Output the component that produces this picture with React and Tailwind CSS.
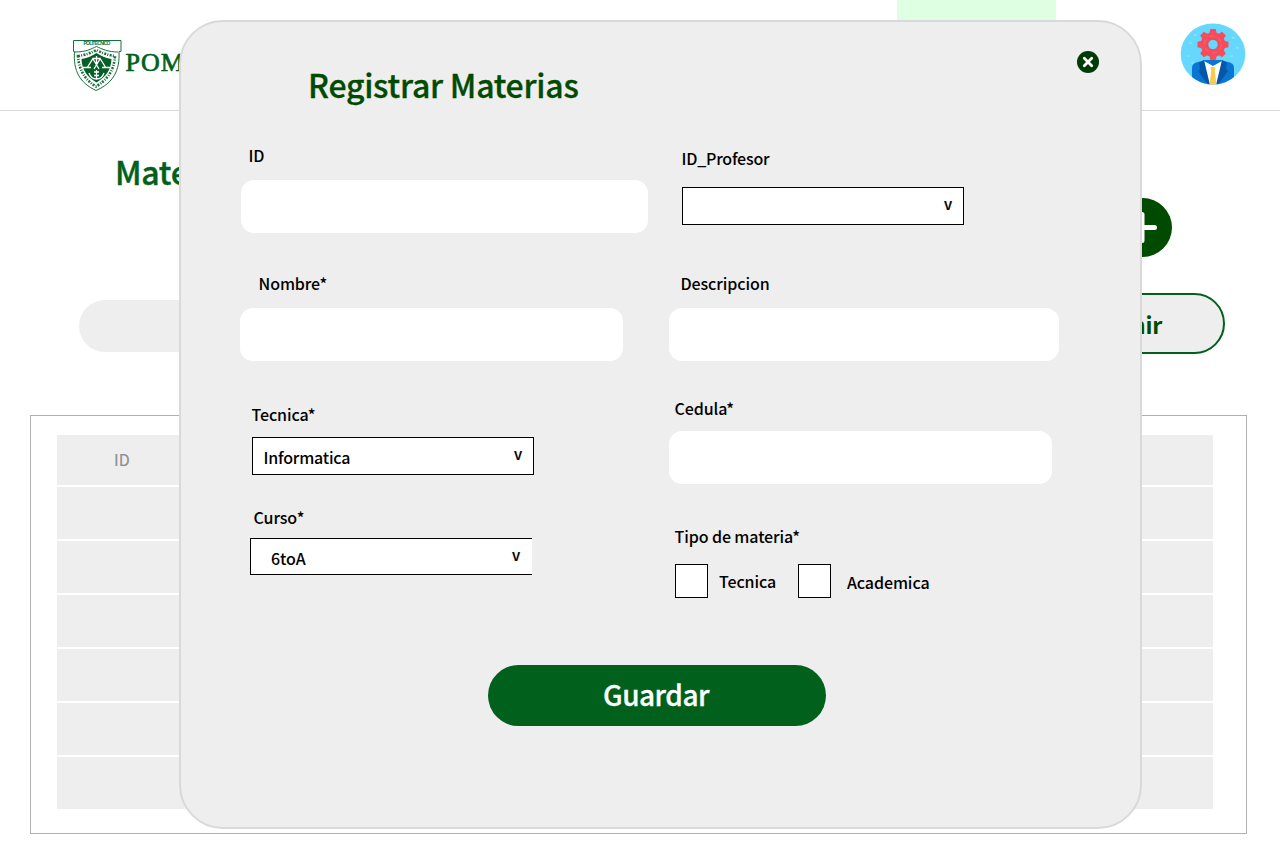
import React from "react";

function Label({ children, className = "" }) {
  return (
    <label className={`block h-6 whitespace-nowrap text-[16px] leading-6 font-medium tracking-[-0.1px] text-black ${className}`}>
      {children}
    </label>
  );
}

function Field({ className = "" }) {
  return <div className={`h-[53px] shrink-0 rounded-[13px] bg-white ${className}`} />;
}

function Select({ children, className = "", textClass = "" }) {
  return (
    <div className={`flex w-[282px] shrink-0 items-start justify-between border border-black bg-white text-[16px] leading-6 font-medium tracking-[-0.1px] text-black ${className}`}>
      <span className={textClass}>{children}</span>
      <span className="mr-[11px] mt-[4px] text-[15px] [-webkit-text-stroke:0.2px_black]">v</span>
    </div>
  );
}

function Shield() {
  return (
    <svg width="50" height="53" viewBox="0 0 50 53" fill="none">
      <path d="M1.5 1.5H49V12.5H47C48 32 41 44 24 51.5C8 44 1 32 2.5 12.5H1.5Z" fill="#fff" stroke="#17703a" strokeWidth="1" />
      <path d="M3 13C14 13 19 10 24.5 7.5C30 10 36 13 46 13" stroke="#17703a" strokeWidth="1" />
      <text x="25" y="6.3" textAnchor="middle" fontSize="5" fontWeight="700" textLength="27" fill="#17703a" fontFamily="Liberation Sans">POLITÉCNICO</text>
      <path d="M6 17Q15 16 24.5 11Q34 16 43 17C42 32 35 41 24 47.5C13 41 7 31 6 17Z" stroke="#17703a" strokeWidth="2.6" strokeDasharray="2 1.2 1 1.4" />
      <path d="M9.5 20Q17 19 24.5 14Q32 19 39.5 20C39 31 34 38 24.5 43.5C15 38 10 31 9.5 20Z" fill="#075f28" />
      <path d="M11 28.5H19M30 28.5H38M15 29L21 19.5H28L34 29M21 20L27 30M28 20L22 30M24.5 17V27M24.5 31V40M17 34Q19 40 24.5 40Q30 40 32 34M22 33H27M22 36.5H27" stroke="#fff" strokeWidth="1.3" />
    </svg>
  );
}

function Avatar() {
  return (
    <svg width="66" height="62" viewBox="0 0 66 62" fill="none">
      <clipPath id="avatar-disc"><ellipse cx="33" cy="31" rx="32.3" ry="30.5" /></clipPath>
      <g clipPath="url(#avatar-disc)">
        <rect width="66" height="62" fill="#67d8fd" />
        <path d="M9 20h3M7 33h3M14 12h3M52 15h3M56 25h3M50 33h3M11 40h3" stroke="#9ce8ff" />
        <path d="M12 62V45Q12 40 18 39L25 37H41L48 39Q54 40 54 45V62Z" fill="#0876d4" />
        <path d="M24 38L33 43L42 38L39 62H27Z" fill="#fff" />
        <path d="M24 37L19 40L20 46L18 48L28 62H30ZM42 37L47 40L46 46L48 48L38 62H36Z" fill="#0657a8" />
        <path d="M30.5 44H35.5L34.8 48L36.5 62H29.5L31.2 48Z" fill="#fccb4e" />
        <g fill="#f84c5b">
          <circle cx="33" cy="21.5" r="12.3" />
          {[0, 45, 90, 135, 180, 225, 270, 315].map((a) => (
            <path key={a} d="M30.3 6H35.7L37 12H29Z" transform={`rotate(${a} 33 21.5)`} />
          ))}
        </g>
        <circle cx="33" cy="21.5" r="8.5" stroke="#ff7581" strokeWidth=".6" strokeDasharray="5 4" />
        <circle cx="33" cy="21.5" r="5.2" fill="#67d8fd" stroke="#dc3f55" strokeWidth=".8" />
      </g>
    </svg>
  );
}

function Page() {
  return (
    <div className="flex h-full flex-col">
      <header className="flex h-[111px] shrink-0 items-start border-b border-[#d9d9d9]">
        <div className="ml-[72px] mt-[39px] flex">
          <Shield />
          <span className="ml-[3.5px] mt-[8px] font-['Liberation_Serif',serif] text-[26px] leading-8 tracking-[1px] text-[#00601c] [-webkit-text-stroke:0.7px_#00601c]">POM</span>
        </div>
        <div className="ml-auto mr-[124px] h-[30px] w-[159px] bg-[#dfffe3]" />
        <div className="mr-[34px] mt-[23px]"><Avatar /></div>
      </header>
      <div className="flex h-[87px] shrink-0 items-start">
        <h1 className="ml-[115px] mt-[40px] text-[32px] leading-10 font-medium tracking-[-0.3px] text-[#00601c] [-webkit-text-stroke:0.4px_#00601c]">Materias</h1>
      </div>
      <div className="flex h-[59px] shrink-0 justify-end pr-[108px]">
        <svg width="59" height="59" viewBox="0 0 59 59">
          <circle cx="29.5" cy="29.5" r="29.5" fill="#004b00" />
          <path d="M29 16.5V42.5M16.5 29.5H41.5" stroke="#fff" strokeWidth="5" strokeLinecap="round" />
        </svg>
      </div>
      <div className="mt-[36px] flex h-[61px] shrink-0 justify-between pl-[79px] pr-[55px]">
        <div className="mt-[7px] h-[52px] w-[400px] rounded-full bg-[#eeeeee]" />
        <div className="flex h-[61px] w-[190px] items-center justify-end rounded-full border-2 border-[#00601c] bg-[#eeeeee] pr-[61px] pt-[2px] text-[23px] font-bold tracking-[-0.2px] text-[#004b00]">
          Imprimir
        </div>
      </div>
      <div className="ml-[30px] mt-[61px] h-[419px] w-[1217px] shrink-0 border border-[#b0b0b0] pl-[26px] pt-[19px]">
        <div className="flex w-[1156px] flex-col bg-white">
          <div className="h-[50px] bg-[#eeeeee] pl-[57px] text-[16px] leading-[49px] text-[#8e8e8e] [-webkit-text-stroke:0.2px_#8e8e8e]">ID</div>
          {[0, 1, 2, 3, 4, 5].map((i) => (
            <div key={i} className="mt-[2px] h-[52px] bg-[#eeeeee]" />
          ))}
        </div>
      </div>
    </div>
  );
}

function Modal() {
  return (
    <div className="absolute left-[179px] top-[20px] flex h-[809px] w-[963px] flex-col rounded-[44px] border-2 border-[#d9d9d9] bg-[#eeeeee]">
      <div className="flex h-[121px] shrink-0 items-start justify-between">
        <h2 className="ml-[127px] mt-[42px] text-[32px] leading-10 font-medium tracking-[-0.25px] text-[#004b00] [-webkit-text-stroke:0.3px_#004b00]">Registrar Materias</h2>
        <svg className="mr-[41px] mt-[29px]" width="22" height="22" viewBox="0 0 22 22">
          <circle cx="11" cy="11" r="11" fill="#003c05" />
          <path d="M7.3 7.3L14.7 14.7M14.7 7.3L7.3 14.7" stroke="#fff" strokeWidth="2.8" strokeLinecap="round" />
        </svg>
      </div>
      <div className="flex h-[522px] shrink-0">
        <div className="ml-[59px] flex w-[429px] flex-col">
          <Label className="ml-[8.5px]">ID</Label>
          <Field className="mt-[13px] ml-px w-[407px]" />
          <Label className="mt-[38px] ml-[18.5px]">Nombre*</Label>
          <Field className="mt-[13px] w-[383px]" />
          <Label className="mt-[41px] ml-[11.5px]">Tecnica*</Label>
          <Select className="mt-[11px] ml-[12px] h-[38px] pl-[10.5px]" textClass="mt-[7px] tracking-[-0.2px]">Informatica</Select>
          <Label className="mt-[30px] ml-[13.5px]">Curso*</Label>
          <Select className="mt-[9px] ml-[10px] h-[37px] border-r-0 pl-[20px] pr-px" textClass="mt-[7px]">6toA</Select>
        </div>
        <div className="flex flex-col pt-[3px]">
          <Label className="ml-[12.5px] tracking-[-0.2px]">ID_Profesor</Label>
          <Select className="mt-[17px] ml-[13px] h-[38px]" />
          <Label className="mt-[46px] ml-[11.5px]">Descripcion</Label>
          <Field className="mt-[13px] w-[390px]" />
          <Label className="mt-[35px] ml-[5.5px]">Cedula*</Label>
          <Field className="mt-[11px] w-[383px]" />
          <Label className="mt-[40px] ml-[5.5px]">Tipo de materia*</Label>
          <div className="mt-[16px] ml-[6px] flex">
            <div className="h-[34px] w-[33px] border border-black bg-white" />
            <Label className="ml-[11px] mt-[5px] w-[79px]">Tecnica</Label>
            <div className="h-[34px] w-[33px] border border-black bg-white" />
            <Label className="ml-[16px] mt-[6px]">Academica</Label>
          </div>
        </div>
      </div>
      <button className="ml-[307px] h-[61px] w-[338px] shrink-0 rounded-full bg-[#00601c] pb-[3px] pr-[2px] text-[28px] leading-[57px] font-medium tracking-[-0.5px] text-white [-webkit-text-stroke:0.3px_white]">
        Guardar
      </button>
    </div>
  );
}

export default function App() {
  return (
    <div className="relative h-[853px] w-[1280px] overflow-hidden bg-white font-['Noto_Sans_CJK_SC',sans-serif]">
      <Page />
      <Modal />
    </div>
  );
}
